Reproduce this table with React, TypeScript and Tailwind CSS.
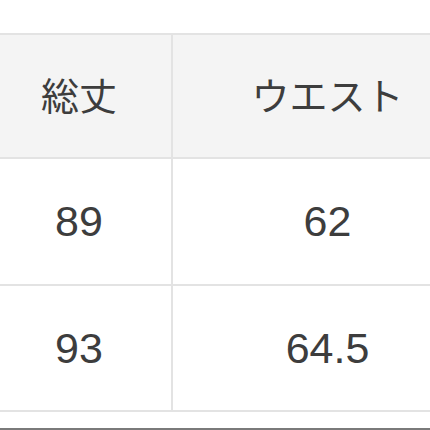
const rows = [
  { length: '89', waist: '62', h: 'h-[127px]' },
  { length: '93', waist: '64.5', h: 'h-[126px]' },
];

export default function App() {
  return (
    <div className="w-full h-screen overflow-hidden bg-white pt-[33px] text-[#3d3d3d]">
      <div className="w-full border-t-2 border-[#e3e3e3]">
        <div className="flex h-[124px] bg-[#f4f4f4] border-b-2 border-[#e3e3e3]">
          <div className="w-[173px] shrink-0 border-r-2 border-[#e3e3e3] flex items-center justify-center text-[38px] font-['Noto_Sans_CJK_JP',sans-serif] pr-[13px] pb-[6px]">
            総丈
          </div>
          <div className="flex-1 flex items-center justify-center text-[38px] font-['Noto_Sans_CJK_JP',sans-serif] pl-[52px] pb-[6px]">
            ウエスト
          </div>
        </div>
        {rows.map((r) => (
          <div key={r.length} className={`flex ${r.h} border-b-2 border-[#e3e3e3]`}>
            <div className="w-[173px] shrink-0 border-r-2 border-[#e3e3e3] flex items-center justify-center text-[43px] font-['Liberation_Sans',sans-serif] pr-[13px]">
              {r.length}
            </div>
            <div className="flex-1 flex items-center justify-center text-[43px] font-['Liberation_Sans',sans-serif] pl-[52px]">
              {r.waist}
            </div>
          </div>
        ))}
      </div>
      <div className="mt-[16px] h-[2px] bg-[#7a7a7a]" />
    </div>
  );
}
